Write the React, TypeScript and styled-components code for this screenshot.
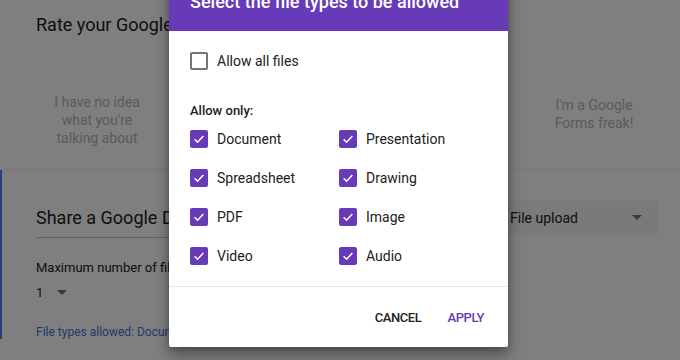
import React from 'react';
import styled, { createGlobalStyle } from 'styled-components';

const GlobalStyle = createGlobalStyle`
  html, body {
    margin: 0;
    padding: 0;
    background: #fff;
    font-family: Roboto, "Liberation Sans", Arial, sans-serif;
  }
  * { box-sizing: border-box; }
`;

const Screen = styled.div`
  position: relative;
  width: 680px;
  height: 360px;
  overflow: hidden;
  background: #fff;
`;

const Card = styled.div<{ active?: boolean }>`
  background: #fff;
  border-left: 2px solid ${(p) => (p.active ? '#4285f4' : 'transparent')};
  border-bottom: ${(p) => (p.active ? 'none' : '1px solid #eee')};
  padding: ${(p) => (p.active ? '27px 22px 0 34px' : '12px 24px 0 34px')};
  height: ${(p) => (p.active ? 'auto' : '170px')};
`;

const QuestionTitle = styled.div`
  font-size: 18px;
  color: #212121;
  line-height: 26px;
`;

const ScaleRow = styled.div`
  display: flex;
  justify-content: space-between;
  margin-top: 55px;
`;

const ScaleLabel = styled.div<{ width: number; offset?: number }>`
  width: ${(p) => p.width}px;
  margin-top: ${(p) => p.offset || 0}px;
  text-align: center;
  font-size: 14px;
  line-height: 18px;
  color: #b6b6b6;
`;

const TitleRow = styled.div`
  display: flex;
  align-items: center;
  justify-content: space-between;
`;

const TitleInput = styled.div`
  width: 440px;
  font-size: 18px;
  color: #212121;
  line-height: 26px;
  padding-bottom: 6px;
  border-bottom: 1px solid #c4c4c4;
  margin-top: 8px;
`;

const TypeSelect = styled.div`
  width: 166px;
  height: 34px;
  display: flex;
  align-items: center;
  justify-content: space-between;
  padding: 0 16px 0 18px;
  background: #f4f4f4;
  font-size: 14px;
  color: #212121;
`;

const Caret = styled.span`
  width: 0;
  height: 0;
  border-left: 5px solid transparent;
  border-right: 5px solid transparent;
  border-top: 5px solid #757575;
`;

const FieldLabel = styled.div`
  margin-top: 22px;
  font-size: 13px;
  color: #212121;
`;

const NumberSelect = styled.div`
  display: flex;
  align-items: center;
  gap: 14px;
  margin-top: 10px;
  font-size: 13px;
  color: #212121;
`;

const TypesLink = styled.div`
  margin-top: 25px;
  font-size: 12px;
  color: #4673d6;
`;

const Scrim = styled.div`
  position: absolute;
  inset: 0;
  background: rgba(0, 0, 0, 0.5);
`;

const Dialog = styled.div`
  position: absolute;
  left: 169px;
  top: -24px;
  width: 339px;
  background: #fff;
  border-radius: 2px;
  box-shadow: 0 8px 16px rgba(0, 0, 0, 0.35), 0 2px 6px rgba(0, 0, 0, 0.2);
`;

const DialogHeader = styled.div`
  height: 55px;
  background: #673ab7;
  padding: 14px 21px 0;
  color: #fff;
  font-size: 18px;
  font-weight: 500;
  line-height: 24px;
`;

const DialogBody = styled.div`
  padding: 21px 21px 0;
`;

const OptionRow = styled.label`
  display: flex;
  align-items: center;
  gap: 9px;
  height: 18px;
  font-size: 14px;
  color: #212121;
`;

const Box = styled.span<{ checked: boolean }>`
  width: 18px;
  height: 18px;
  border-radius: 2px;
  display: flex;
  align-items: center;
  justify-content: center;
  background: ${(p) => (p.checked ? '#673ab7' : '#fff')};
  border: ${(p) => (p.checked ? 'none' : '2px solid #757575')};
`;

const SectionLabel = styled.div`
  margin-top: 33px;
  font-size: 13px;
  font-weight: 500;
  color: #212121;
`;

const OptionGrid = styled.div`
  display: grid;
  grid-template-columns: 149px 149px;
  row-gap: 21px;
  margin-top: 12px;
  padding-bottom: 21px;
`;

const Divider = styled.div`
  height: 1px;
  background: #e8e8e8;
`;

const Actions = styled.div`
  display: flex;
  justify-content: flex-end;
  gap: 26px;
  padding: 24px 24px 22px;
`;

const ActionButton = styled.span<{ primary?: boolean }>`
  font-size: 13px;
  font-weight: 500;
  line-height: 14px;
  letter-spacing: -0.4px;
  color: ${(p) => (p.primary ? '#673ab7' : '#212121')};
`;

function Checkbox({ checked, label }: { checked: boolean; label: string }) {
  return (
    <OptionRow>
      <Box checked={checked}>
        {checked && (
          <svg width="14" height="14" viewBox="0 0 24 24">
            <path d="M4.5 12.5l5 5L19.5 7" fill="none" stroke="#fff" strokeWidth="2.6" />
          </svg>
        )}
      </Box>
      {label}
    </OptionRow>
  );
}

const types = ['Document', 'Presentation', 'Spreadsheet', 'Drawing', 'PDF', 'Image', 'Video', 'Audio'];

export default function App() {
  return (
    <Screen>
      <GlobalStyle />
      <Card>
        <QuestionTitle>Rate your Google Forms skills</QuestionTitle>
        <ScaleRow>
          <ScaleLabel width={122}>
            I have no idea
            <br />
            what you're
            <br />
            talking about
          </ScaleLabel>
          <ScaleLabel width={124} offset={3}>
            I'm a Google
            <br />
            Forms freak!
          </ScaleLabel>
        </ScaleRow>
      </Card>
      <Card active>
        <TitleRow>
          <TitleInput>Share a Google Doc with us</TitleInput>
          <TypeSelect>
            File upload
            <Caret />
          </TypeSelect>
        </TitleRow>
        <FieldLabel>Maximum number of files</FieldLabel>
        <NumberSelect>
          1
          <Caret />
        </NumberSelect>
        <TypesLink>File types allowed: Document, Presentation, Spreadsheet</TypesLink>
      </Card>
      <Scrim />
      <Dialog>
        <DialogHeader>Select the file types to be allowed</DialogHeader>
        <DialogBody>
          <Checkbox checked={false} label="Allow all files" />
          <SectionLabel>Allow only:</SectionLabel>
          <OptionGrid>
            {types.map((t) => (
              <Checkbox key={t} checked label={t} />
            ))}
          </OptionGrid>
        </DialogBody>
        <Divider />
        <Actions>
          <ActionButton>CANCEL</ActionButton>
          <ActionButton primary>APPLY</ActionButton>
        </Actions>
      </Dialog>
    </Screen>
  );
}
